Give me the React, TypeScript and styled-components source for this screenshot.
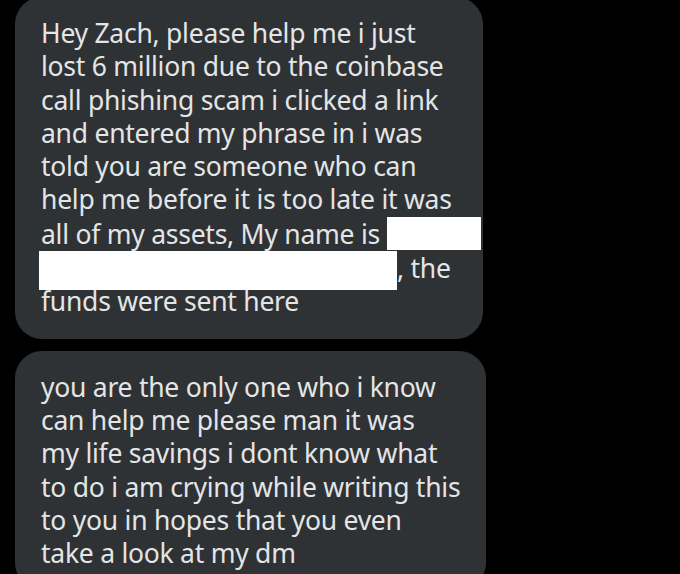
import React from 'react';
import styled, { createGlobalStyle } from 'styled-components';

const GlobalStyle = createGlobalStyle`
  html, body {
    margin: 0;
    padding: 0;
    background: #000;
  }
  body {
    font-family: "Noto Sans", "Open Sans", sans-serif;
    overflow: hidden;
  }
`;

const Thread = styled.div`
  display: flex;
  flex-direction: column;
  gap: 12px;
  padding-left: 15px;
  margin-top: -3px;
`;

const Bubble = styled.div<{ $width: number }>`
  width: ${p => p.$width}px;
  box-sizing: border-box;
  background: #2f3235;
  border-radius: 27px;
  padding: 20px 20px 20px 26px;
  color: #e3e5e6;
  font-size: 26.5px;
  line-height: 33.3px;
  letter-spacing: -0.25px;
`;

const Line = styled.div`
  white-space: nowrap;
`;

// white box covering a name in the message
const Redacted = styled.span<{ $width: number; $drop?: number; $shift?: number }>`
  display: inline-block;
  width: ${p => p.$width}px;
  height: 33px;
  vertical-align: -6px;
  background: #fff;
  margin-left: ${p => p.$shift ?? 0}px;
  box-shadow: 0 ${p => p.$drop ?? 0}px 0 #fff;
`;

const firstMessage = [
  'Hey Zach, please help me i just',
  'lost 6 million due to the coinbase',
  'call phishing scam i clicked a link',
  'and entered my phrase in i was',
  'told you are someone who can',
  'help me before it is too late it was',
];

const secondMessage = [
  'you are the only one who i know',
  'can help me please man it was',
  'my life savings i dont know what',
  'to do i am crying while writing this',
  'to you in hopes that you even',
  'take a look at my dm',
];

export default function App() {
  return (
    <>
      <GlobalStyle />
      <Thread>
        <Bubble $width={468}>
          {firstMessage.map(l => (
            <Line key={l}>{l}</Line>
          ))}
          <Line>
            all of my assets, My name is<Redacted $width={94} $shift={7} />
          </Line>
          <Line>
            <Redacted $width={358} $shift={-2} $drop={6} />, the
          </Line>
          <Line>funds were sent here</Line>
        </Bubble>
        <Bubble $width={471}>
          {secondMessage.map(l => (
            <Line key={l}>{l}</Line>
          ))}
        </Bubble>
      </Thread>
    </>
  );
}
